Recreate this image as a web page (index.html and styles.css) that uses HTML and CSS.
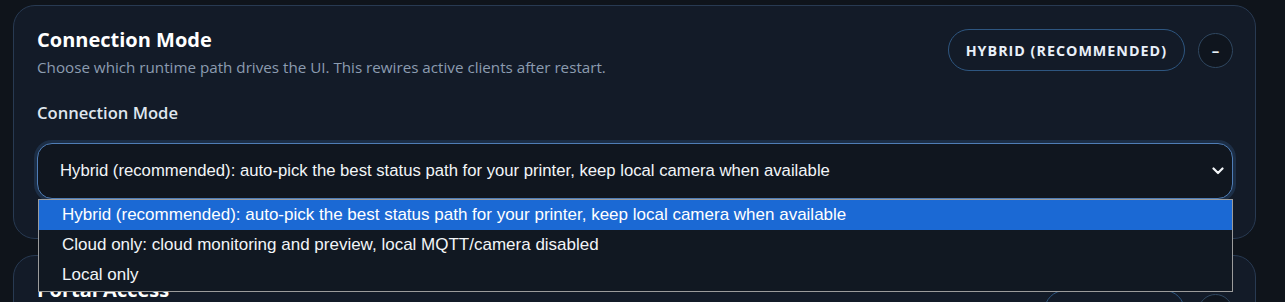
FILE: index.html
```html
<!DOCTYPE html>
<html lang="en">
<head>
<meta charset="utf-8">
<title>Connection Mode</title>
<link rel="stylesheet" href="styles.css">
</head>
<body>
<main class="page">
  <section class="card">
    <header class="card-head">
      <div class="card-titles">
        <h2 class="card-title">Connection Mode</h2>
        <p class="card-sub">Choose which runtime path drives the UI. This rewires active clients after restart.</p>
      </div>
      <div class="card-actions">
        <span class="pill">HYBRID (RECOMMENDED)</span>
        <button class="round-btn" type="button">–</button>
      </div>
    </header>
    <div class="field">
      <label class="field-label">Connection Mode</label>
      <div class="select-wrap">
        <div class="select">
          <span class="select-value">Hybrid (recommended): auto-pick the best status path for your printer, keep local camera when available</span>
          <svg class="chev" width="12" height="8" viewBox="0 0 12 8"><polyline points="1.5,1.5 6,6 10.5,1.5" fill="none" stroke="#f2f5f8" stroke-width="2.2" stroke-linecap="round" stroke-linejoin="round"/></svg>
        </div>
        <ul class="dropdown">
          <li class="opt opt-active">Hybrid (recommended): auto-pick the best status path for your printer, keep local camera when available</li>
          <li class="opt">Cloud only: cloud monitoring and preview, local MQTT/camera disabled</li>
          <li class="opt">Local only</li>
        </ul>
      </div>
    </div>
  </section>
  <section class="card card-second">
    <header class="card-head">
      <div class="card-titles">
        <h2 class="card-title">Portal Access</h2>
      </div>
      <div class="card-actions card-actions-low">
        <span class="pill">PIN LOCK ON</span>
        <button class="round-btn" type="button">+</button>
      </div>
    </header>
  </section>
</main>
</body>
</html>
```
FILE: styles.css
```css
* { box-sizing: border-box; }
html, body { margin: 0; padding: 0; }
body {
  background: #0f141b;
  color: #eef2f7;
  font-family: "Open Sans", "Noto Sans", sans-serif;
  height: 302px;
  overflow: hidden;
}
.page {
  padding: 5px 29px 0 13px;
  display: flex;
  flex-direction: column;
  gap: 16px;
}
.card {
  background: #131b28;
  border: 1px solid #283a52;
  border-radius: 22px;
  padding: 20px 22px 39px 23px;
}
.card-head {
  display: flex;
  justify-content: space-between;
  align-items: flex-start;
}
.card-title {
  margin: 0;
  font-size: 20px;
  line-height: 28px;
  font-weight: 700;
  color: #ffffff;
}
.card-sub {
  margin: 3px 0 0;
  font-size: 15.2px;
  line-height: 20px;
  color: #8c9cb0;
}
.card-actions {
  display: flex;
  align-items: center;
  gap: 13px;
  margin-top: 3px;
}
.card-actions-low { margin-top: 14px; }
.pill {
  display: inline-flex;
  align-items: center;
  height: 42px;
  padding: 0 17px;
  border: 1px solid #2e5680;
  border-radius: 21px;
  font-size: 14.3px;
  font-weight: 700;
  letter-spacing: 1px;
  color: #e9f0f9;
}
.round-btn {
  width: 35px;
  height: 35px;
  border-radius: 50%;
  border: 1px solid #2f4760;
  background: #0f151e;
  color: #e9f0f9;
  font-family: "Open Sans", sans-serif;
  font-size: 15px;
  font-weight: 700;
  padding: 0;
  display: flex;
  align-items: center;
  justify-content: center;
}
.field { margin-top: 25px; }
.field-label {
  display: block;
  font-size: 16.6px;
  line-height: 22px;
  font-weight: 600;
  color: #dfe6ee;
}
.select-wrap {
  position: relative;
  margin-top: 19px;
}
.select {
  height: 56px;
  display: flex;
  align-items: center;
  justify-content: space-between;
  padding: 0 8px 0 22px;
  background: #10161f;
  border: 1px solid #4f7db6;
  border-radius: 15px;
  box-shadow: 0 0 0 3px #1c2e46;
  font-family: "Liberation Sans", Arial, sans-serif;
  font-size: 16.7px;
  color: #f2f5f8;
}
.chev { display: block; }
.dropdown {
  position: absolute;
  top: 56px;
  left: 1px;
  right: 0;
  margin: 0;
  padding: 0 0 1px;
  list-style: none;
  background: #111822;
  border: 1px solid #9c9c9c;
  font-family: "Liberation Sans", Arial, sans-serif;
  font-size: 17px;
  color: #f2f5f8;
}
.opt {
  height: 30px;
  line-height: 30px;
  padding-left: 23px;
  white-space: nowrap;
}
.opt-active { background: #1b69d4; color: #ffffff; }
```
